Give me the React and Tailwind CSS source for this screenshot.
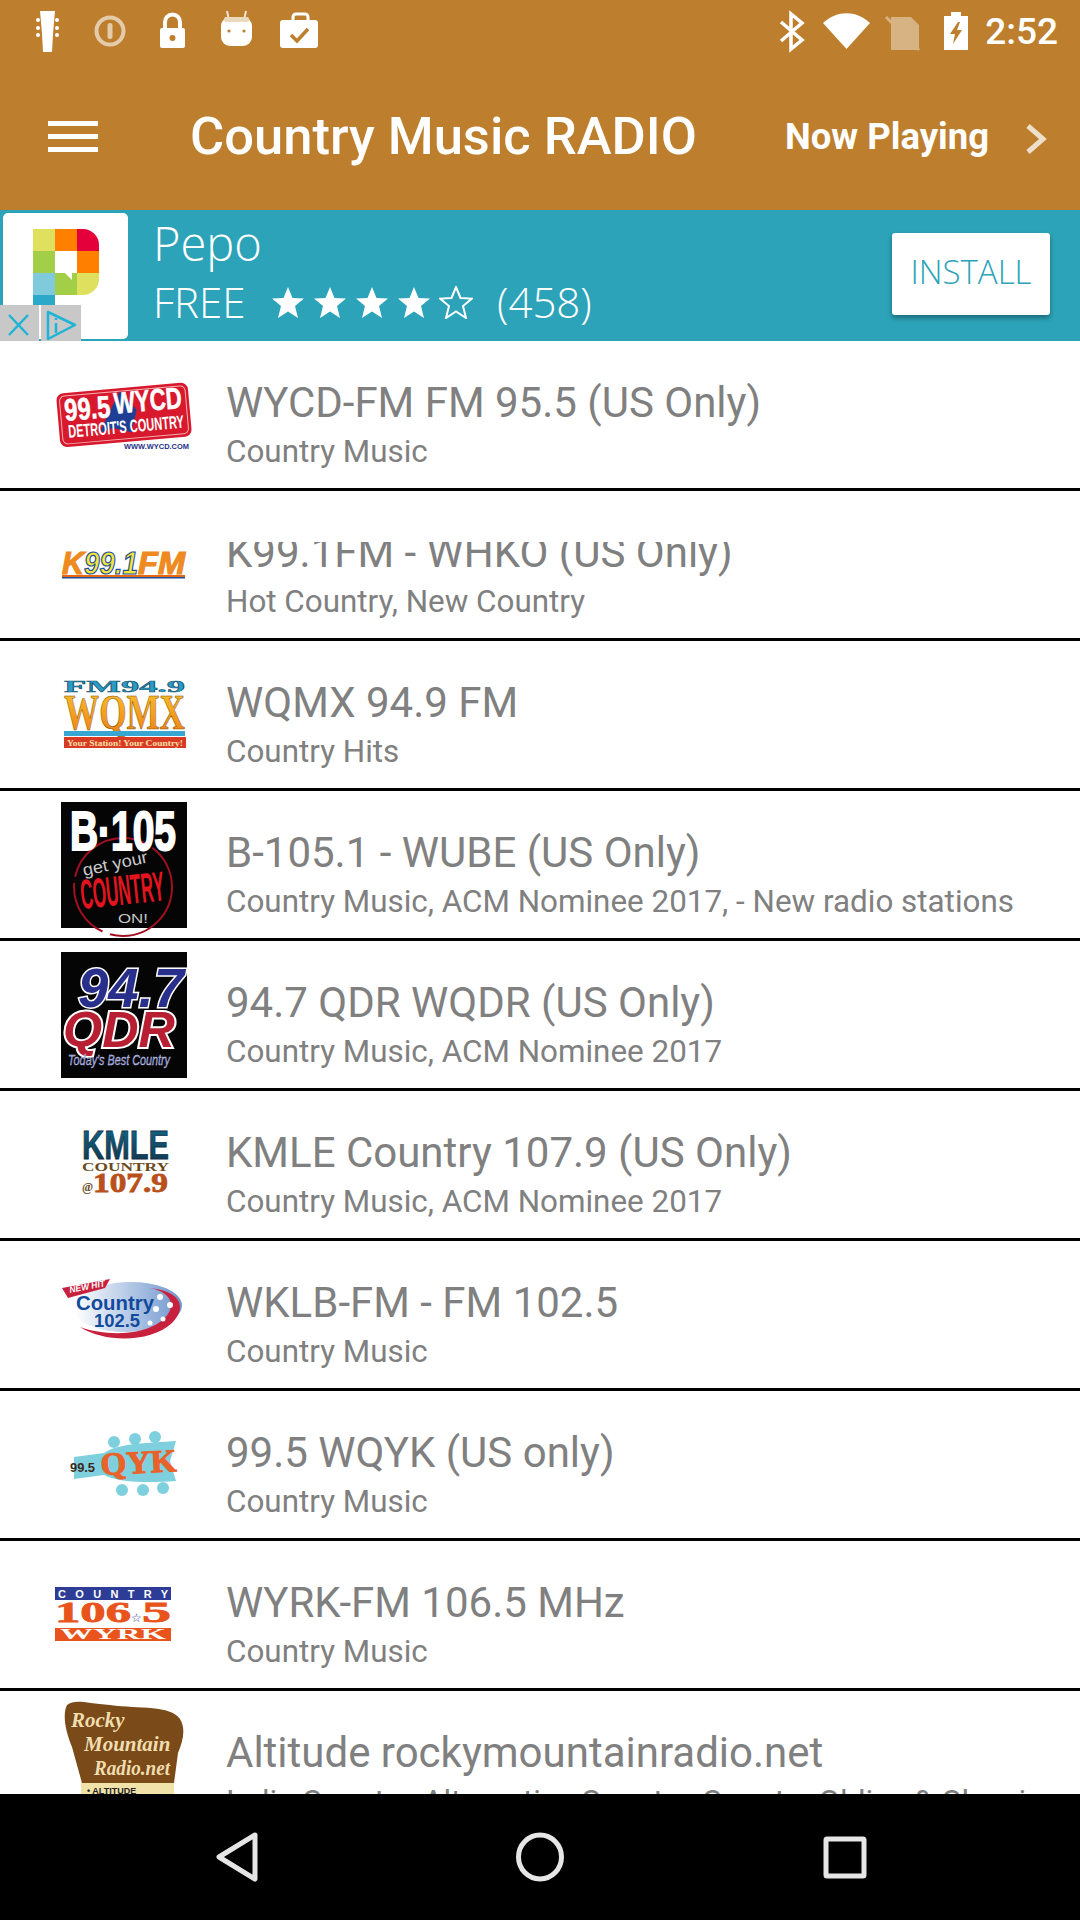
const roboto = '"Roboto", "Liberation Sans", sans-serif'

const sans = 'Liberation Sans, sans-serif'
const serif = 'Liberation Serif, serif'

function StatusLeft() {
  return (
    <svg width="330" height="62" viewBox="0 0 330 62" className="shrink-0" fill="#fff">
      {/* guitar head */}
      <path d="M40 11 L55 11 L54 22 L53 34 L52 52 L43 52 L42 34 L41 22 Z" />
      <circle cx="38" cy="20" r="2" /><circle cx="38" cy="28" r="2" /><circle cx="38" cy="35" r="2" />
      <circle cx="57" cy="20" r="2" /><circle cx="57" cy="28" r="2" /><circle cx="57" cy="35" r="2" />
      {/* priority */}
      <g opacity="0.6">
        <circle cx="110" cy="31" r="13.5" fill="none" stroke="#fff" strokeWidth="4" />
        <rect x="107.5" y="23" width="5" height="16" rx="2.5" />
      </g>
      {/* lock */}
      <path d="M165 29 V22 a7.5 7.5 0 0 1 15 0 V29" fill="none" stroke="#fff" strokeWidth="4" />
      <rect x="160" y="28" width="25" height="20" rx="2" />
      <circle cx="172.5" cy="38" r="3" fill="#BD7F2E" />
      {/* marshmallow android */}
      <path d="M229 20 L227 11 M244 20 L246 11" stroke="#fff" strokeWidth="2" opacity="0.8" />
      <rect x="221" y="17" width="31" height="29" rx="9" />
      <rect x="224" y="17" width="25" height="5" rx="2" fill="#EBD9BD" />
      <circle cx="229" cy="31" r="1.6" fill="#BD7F2E" /><circle cx="244" cy="31" r="1.6" fill="#BD7F2E" />
      {/* briefcase */}
      <path d="M293 21 V17 a3 3 0 0 1 3 -3 H305 a3 3 0 0 1 3 3 V21" fill="none" stroke="#fff" strokeWidth="3" />
      <rect x="280" y="20" width="38" height="28" rx="3" />
      <path d="M291 35 L297 41 L308 29" fill="none" stroke="#BD7F2E" strokeWidth="3.5" />
    </svg>
  )
}

function StatusRight() {
  return (
    <svg width="210" height="62" viewBox="760 0 210 62" className="shrink-0" fill="#fff">
      {/* bluetooth */}
      <path d="M780 22 L801 40 L790 49 V14 L801 23 L780 41" fill="none" stroke="#fff" strokeWidth="3.5" />
      {/* wifi */}
      <path d="M822 23 C836 10 855 10 869 23 L845.5 49 Z" />
      {/* no sim */}
      <g opacity="0.4">
        <path d="M890 17 H910 L918 25 V50 H890 Z" />
        <path d="M885 17 L918 50" stroke="#fff" strokeWidth="3" />
      </g>
      {/* battery */}
      <path d="M950 12 H960 V16 H967 V50 H943 V16 H950 Z" />
      <path d="M957 22 L949 34 H954 L952 44 L961 30 H956 L959 22 Z" fill="#BD7F2E" />
    </svg>
  )
}

function Star({ filled }) {
  return (
    <svg width="34" height="33" viewBox="0 0 34 33" className="shrink-0">
      <polygon
        points="17,1 21.5,12 33,12.6 24,20 27,32 17,25.5 7,32 10,20 1,12.6 12.5,12"
        fill={filled ? '#fff' : 'none'}
        stroke="#fff"
        strokeWidth={filled ? 0 : 2}
      />
    </svg>
  )
}

function PepoIcon() {
  return (
    <svg width="125" height="126" viewBox="0 0 125 126" className="shrink-0">
      <rect width="125" height="126" rx="5" fill="#fff" />
      <rect x="30" y="16" width="22" height="22" fill="#DFE05E" />
      <rect x="52" y="16" width="22" height="22" fill="#FF7F00" />
      <path d="M74 16 H80 a16 16 0 0 1 16 16 V38 H74 Z" fill="#E4003A" />
      <rect x="30" y="38" width="22" height="22" fill="#A3CE47" />
      <rect x="74" y="38" width="22" height="22" fill="#FF7F00" />
      <rect x="30" y="60" width="22" height="22" fill="#7FCBDC" />
      <path d="M52 60 L62 60 L69 67 L69 60 H74 V82 H52 Z" fill="#A3CE47" />
      <path d="M74 60 H96 V66 a16 16 0 0 1 -16 16 H74 Z" fill="#DFE05E" />
      <rect x="30" y="82" width="22" height="10" fill="#2CA9C9" />
    </svg>
  )
}

function AdBadge() {
  return (
    <svg width="81" height="36" viewBox="0 0 81 36" className="absolute left-0 bottom-0">
      <rect width="39" height="36" fill="#C8C8C8" />
      <rect x="41" width="40" height="36" fill="#C8C8C8" />
      <path d="M9 10 L28 30 M28 10 L9 30" stroke="#1FB4D6" strokeWidth="2.5" />
      <path d="M48 7 L75 20 L48 34 Z" fill="none" stroke="#1FB4D6" strokeWidth="2.5" strokeLinejoin="round" />
      <path d="M56 18 V28 M56 13 V15" stroke="#1FB4D6" strokeWidth="2.5" />
    </svg>
  )
}

function LogoWycd() {
  return (
    <g>
      <g transform="rotate(-5 123 74)">
        <rect x="58" y="47" width="132" height="54" rx="7" fill="#D8182C" />
        <rect x="61" y="50" width="126" height="48" rx="5" fill="none" stroke="#F3B3B3" strokeWidth="1" />
        <path d="M122 50 L137 70 L130 92 L112 86 L98 90 L112 66 Z" fill="#1F3F95" />
        <text x="65" y="75" fontFamily={sans} fontWeight="700" fontSize="31" fill="#fff" stroke="#fff" strokeWidth="0.6" textLength="46" lengthAdjust="spacingAndGlyphs">99.5</text>
        <text x="115" y="72" fontFamily={sans} fontWeight="700" fontSize="30" fill="#fff" stroke="#fff" strokeWidth="0.6" textLength="68" lengthAdjust="spacingAndGlyphs">WYCD</text>
        <text x="67" y="92" fontFamily={sans} fontWeight="700" fontSize="18" fill="#fff" textLength="116" lengthAdjust="spacingAndGlyphs">DETROIT'S COUNTRY</text>
      </g>
      <text x="124" y="108" fontFamily={sans} fontWeight="700" fontSize="7" fill="#25308A" textLength="65" lengthAdjust="spacingAndGlyphs">WWW.WYCD.COM</text>
    </g>
  )
}

function LogoK99() {
  return (
    <g>
      <text x="62" y="83" fontFamily={sans} fontWeight="700" fontStyle="italic" fontSize="31" fill="#EE8A22" stroke="#EE8A22" strokeWidth="1.2" textLength="22" lengthAdjust="spacingAndGlyphs">K</text>
      <text x="84" y="83" fontFamily={sans} fontWeight="700" fontStyle="italic" fontSize="31" fill="#F4E53A" stroke="#1D4F9C" strokeWidth="1.2" textLength="54" lengthAdjust="spacingAndGlyphs">99.1</text>
      <text x="138" y="83" fontFamily={sans} fontWeight="700" fontStyle="italic" fontSize="31" fill="#EE8A22" stroke="#EE8A22" strokeWidth="1.2" textLength="47" lengthAdjust="spacingAndGlyphs">FM</text>
      <rect x="62" y="84" width="123" height="2" fill="#E8680F" />
      <rect x="62" y="86" width="123" height="1.5" fill="#1D4F9C" />
    </g>
  )
}

function LogoWqmx() {
  return (
    <g>
      <defs>
        <linearGradient id="wq" x1="0" y1="0" x2="0" y2="1">
          <stop offset="0" stopColor="#F9C62E" />
          <stop offset="1" stopColor="#EE7C12" />
        </linearGradient>
      </defs>
      <text x="64" y="51" fontFamily={serif} fontWeight="700" fontSize="17" fill="#2A9CC6" stroke="#14506E" strokeWidth="0.5" textLength="121" lengthAdjust="spacingAndGlyphs">FM94.9</text>
      <text x="64" y="88" fontFamily={serif} fontWeight="700" fontSize="51" fill="url(#wq)" stroke="#7B4A0C" strokeWidth="0.6" textLength="121" lengthAdjust="spacingAndGlyphs">WQMX</text>
      <rect x="64" y="90" width="121" height="5" fill="#37A6D2" />
      <rect x="64" y="96" width="122" height="11" fill="#D83A24" />
      <text x="67" y="105" fontFamily={serif} fontWeight="700" fontSize="9" fill="#F6E0A8" textLength="116" lengthAdjust="spacingAndGlyphs">Your Station! Your Country!</text>
    </g>
  )
}

function LogoB105() {
  return (
    <g>
      <rect x="61" y="11" width="126" height="126" fill="#050505" />
      <circle cx="123" cy="96" r="49" fill="none" stroke="#A01020" strokeWidth="2" strokeDasharray="90 8 60 6" />
      <text x="70" y="59" fontFamily={sans} fontWeight="700" fontSize="55" fill="#fff" stroke="#fff" strokeWidth="2" textLength="106" lengthAdjust="spacingAndGlyphs">B·105</text>
      <text x="84" y="85" fontFamily={sans} fontSize="17" fill="#C9C9C9" transform="rotate(-12 84 85)" textLength="66" lengthAdjust="spacingAndGlyphs">get your</text>
      <text x="82" y="118" fontFamily={sans} fontWeight="700" fontSize="42" fill="#E4141F" transform="rotate(-6 82 118)" textLength="84" lengthAdjust="spacingAndGlyphs">COUNTRY</text>
      <text x="118" y="132" fontFamily={sans} fontSize="13" fill="#C9C9C9" textLength="30" lengthAdjust="spacingAndGlyphs">ON!</text>
    </g>
  )
}

function LogoQdr() {
  return (
    <g>
      <rect x="61" y="11" width="126" height="126" fill="#050505" />
      <text x="78" y="66" fontFamily={sans} fontWeight="700" fontStyle="italic" fontSize="55" fill="#28308C" stroke="#fff" strokeWidth="3" paintOrder="stroke" textLength="106" lengthAdjust="spacingAndGlyphs">94.7</text>
      <text x="63" y="106" fontFamily={sans} fontWeight="700" fontStyle="italic" fontSize="50" fill="#B81F32" stroke="#fff" strokeWidth="4" paintOrder="stroke" textLength="112" lengthAdjust="spacingAndGlyphs">QDR</text>
      <text x="68" y="124" fontFamily={sans} fontStyle="italic" fontSize="14" fill="#7E88CE" stroke="#DDE" strokeWidth="0.3" textLength="102" lengthAdjust="spacingAndGlyphs">Today's Best Country</text>
    </g>
  )
}

function LogoKmle() {
  return (
    <g>
      <defs>
        <linearGradient id="km" x1="0" y1="0" x2="0" y2="1">
          <stop offset="0" stopColor="#0F6B8C" />
          <stop offset="1" stopColor="#123248" />
        </linearGradient>
      </defs>
      <text x="82" y="68" fontFamily={sans} fontWeight="700" fontSize="40" fill="url(#km)" stroke="#123248" strokeWidth="0.8" textLength="87" lengthAdjust="spacingAndGlyphs">KMLE</text>
      <text x="82" y="80" fontFamily={serif} fontWeight="700" fontSize="12" fill="#6A4A20" textLength="87" lengthAdjust="spacingAndGlyphs">COUNTRY</text>
      <text x="82" y="100" fontFamily={serif} fontWeight="700" fontSize="12" fill="#6A4A20">@</text>
      <text x="93" y="101" fontFamily={serif} fontWeight="700" fontSize="27" fill="#B9501C" stroke="#B9501C" strokeWidth="0.8" textLength="75" lengthAdjust="spacingAndGlyphs">107.9</text>
    </g>
  )
}

function LogoCountry() {
  return (
    <g>
      <defs>
        <linearGradient id="cn" x1="0" y1="0" x2="1" y2="0">
          <stop offset="0" stopColor="#FFFFFF" />
          <stop offset="1" stopColor="#6E95CE" />
        </linearGradient>
      </defs>
      <ellipse cx="128" cy="66" rx="54" ry="25" fill="url(#cn)" transform="rotate(-2 128 66)" />
      <path d="M80 86 C105 102 150 102 172 82 C188 66 180 50 150 47 C176 52 176 70 160 81 C140 95 105 95 80 86 Z" fill="#C8213E" />
      <path d="M62 47 L110 38 L105 47 L68 57 Z" fill="#C8213E" />
      <text x="70" y="52" fontFamily={sans} fontStyle="italic" fontWeight="700" fontSize="9" fill="#fff" transform="rotate(-11 70 52)" textLength="36" lengthAdjust="spacingAndGlyphs">NEW HIT</text>
      <text x="76" y="69" fontFamily={sans} fontWeight="700" fontSize="21" fill="#124A9C" textLength="78" lengthAdjust="spacingAndGlyphs">Country</text>
      <text x="94" y="86" fontFamily={sans} fontWeight="700" fontSize="18" fill="#124A9C" textLength="46" lengthAdjust="spacingAndGlyphs">102.5</text>
      <g fill="#fff">
        <circle cx="160" cy="56" r="3" /><circle cx="170" cy="64" r="3" /><circle cx="156" cy="68" r="3" />
        <circle cx="163" cy="78" r="2.5" /><circle cx="150" cy="82" r="2.5" />
      </g>
    </g>
  )
}

function LogoQyk() {
  return (
    <g>
      <path d="M74 66 L104 62 C118 52 150 52 176 50 L170 70 L176 90 C150 92 118 92 104 84 L74 88 Z" fill="#7FD0DE" />
      <g fill="#7FD0DE">
        <circle cx="114" cy="51" r="6" /><circle cx="135" cy="48" r="6" /><circle cx="155" cy="46" r="6" />
        <circle cx="122" cy="99" r="6" /><circle cx="143" cy="99" r="6" /><circle cx="163" cy="97" r="6" />
      </g>
      <text x="70" y="81" fontFamily={sans} fontWeight="700" fontSize="13" fill="#3A2A1C" textLength="25" lengthAdjust="spacingAndGlyphs">99.5</text>
      <text x="101" y="84" fontFamily={serif} fontWeight="700" fontSize="32" fill="#E8622A" stroke="#E8622A" strokeWidth="1" textLength="76" lengthAdjust="spacingAndGlyphs" transform="rotate(-3 101 84)">QYK</text>
    </g>
  )
}

function LogoWyrk() {
  return (
    <g>
      <rect x="55" y="46" width="116" height="13" fill="#2D3C96" />
      <text x="58" y="57" fontFamily={sans} fontWeight="700" fontSize="11" fill="#fff" textLength="110" lengthAdjust="spacing">COUNTRY</text>
      <text x="55" y="81" fontFamily={serif} fontWeight="700" fontSize="29" fill="#E8541C" stroke="#E8541C" strokeWidth="0.8" textLength="76" lengthAdjust="spacingAndGlyphs">106</text>
      <text x="142" y="81" fontFamily={serif} fontWeight="700" fontSize="29" fill="#E8541C" stroke="#E8541C" strokeWidth="0.8" textLength="29" lengthAdjust="spacingAndGlyphs">5</text>
      <text x="131" y="81" fontFamily={sans} fontSize="12" fill="#2D3C96">☆</text>
      <rect x="55" y="87" width="116" height="13" fill="#E8541C" />
      <text x="60" y="98" fontFamily={serif} fontWeight="700" fontSize="14" fill="#fff" textLength="106" lengthAdjust="spacingAndGlyphs">WYRK</text>
    </g>
  )
}

function LogoRocky() {
  return (
    <g>
      <rect x="81" y="90" width="93" height="30" fill="#F0E2A8" />
      <path d="M67 14 C75 8 85 12 110 14 C140 18 170 14 180 28 C186 38 183 50 178 62 L174 92 L82 92 L72 56 C66 42 62 24 67 14 Z" fill="#7A4A18" />
      <text x="71" y="36" fontFamily={serif} fontStyle="italic" fontWeight="700" fontSize="21" fill="#F0DDB0">Rocky</text>
      <text x="84" y="60" fontFamily={serif} fontStyle="italic" fontWeight="700" fontSize="21" fill="#F0DDB0">Mountain</text>
      <text x="94" y="84" fontFamily={serif} fontStyle="italic" fontWeight="700" fontSize="21" fill="#F0DDB0" textLength="76" lengthAdjust="spacingAndGlyphs">Radio.net</text>
      <text x="87" y="103" fontFamily={sans} fontWeight="700" fontSize="9" fill="#222">• ALTITUDE</text>
    </g>
  )
}

const stations = [
  { title: 'WYCD-FM FM 95.5 (US Only)', sub: 'Country Music', logo: <LogoWycd /> },
  { title: 'K99.1FM - WHKO (US Only)', sub: 'Hot Country, New Country', logo: <LogoK99 />, clip: true },
  { title: 'WQMX 94.9 FM', sub: 'Country Hits', logo: <LogoWqmx /> },
  { title: 'B-105.1 - WUBE (US Only)', sub: 'Country Music, ACM Nominee 2017, - New radio stations', logo: <LogoB105 /> },
  { title: '94.7 QDR WQDR (US Only)', sub: 'Country Music, ACM Nominee 2017', logo: <LogoQdr /> },
  { title: 'KMLE Country 107.9 (US Only)', sub: 'Country Music, ACM Nominee 2017', logo: <LogoKmle /> },
  { title: 'WKLB-FM - FM 102.5', sub: 'Country Music', logo: <LogoCountry /> },
  { title: '99.5 WQYK (US only)', sub: 'Country Music', logo: <LogoQyk /> },
  { title: 'WYRK-FM 106.5 MHz', sub: 'Country Music', logo: <LogoWyrk /> },
  { title: 'Altitude rockymountainradio.net', sub: 'Indie Country, Alternative Country, Country Oldies & Classic', logo: <LogoRocky /> },
]

function Row({ station }) {
  return (
    <div className="flex h-[150px] shrink-0 border-b-[3px] border-black bg-white">
      <svg width="226" height="147" viewBox="0 0 226 147" className="shrink-0">
        {station.logo}
      </svg>
      <div className="min-w-0 flex-1 pt-[38px] text-[#808080]">
        <div className={`whitespace-nowrap text-[42px] leading-[48px] ${station.clip ? '[clip-path:inset(13px_-20px_-20px_-20px)]' : ''}`}>
          {station.title}
        </div>
        <div className="mt-[5px] whitespace-nowrap text-[31.4px] leading-[40px]">{station.sub}</div>
      </div>
    </div>
  )
}

export default function App() {
  return (
    <div className="flex h-[1920px] w-[1080px] flex-col overflow-hidden bg-white" style={{ fontFamily: roboto }}>
      <header className="h-[210px] shrink-0 bg-[#BD7F2E] text-white">
        <div className="flex h-[62px] items-center justify-between pr-[22px]">
          <StatusLeft />
          <div className="flex items-center gap-[14px]">
            <StatusRight />
            <span className="text-[37px] font-medium leading-none">2:52</span>
          </div>
        </div>
        <div className="flex h-[148px] items-center">
          <div className="ml-[48px] flex w-[50px] shrink-0 flex-col gap-[8px]">
            <span className="h-[5px] bg-white" />
            <span className="h-[5px] bg-white" />
            <span className="h-[5px] bg-white" />
          </div>
          <h1 className="ml-[92px] w-[595px] shrink-0 whitespace-nowrap text-[52.5px] font-medium leading-none">Country Music RADIO</h1>
          <span className="mt-[3px] whitespace-nowrap text-[36.5px] font-bold leading-none">Now Playing</span>
          <svg width="24" height="32" viewBox="0 0 24 32" className="ml-[35px] mt-[6px] shrink-0">
            <path d="M4 3 L19 16 L4 29" fill="none" stroke="#fff" strokeOpacity="0.75" strokeWidth="5" />
          </svg>
        </div>
      </header>

      <div className="relative flex h-[131px] shrink-0 items-start bg-[#2CA3B8] pl-[3px] pt-[3px] text-white">
        <PepoIcon />
        <div className="ml-[25px] w-[739px] shrink-0 font-['Open_Sans'] font-light">
          <div className="text-[47px] leading-[60px]">Pepo</div>
          <div className="flex items-center">
            <span className="w-[118px] shrink-0 text-[42px] leading-[58px]">FREE</span>
            <div className="flex w-[226px] shrink-0 gap-[8px]">
              <Star filled /><Star filled /><Star filled /><Star filled /><Star />
            </div>
            <span className="text-[42px] leading-[58px]">(458)</span>
          </div>
        </div>
        <div className="mt-[20px] flex h-[82px] w-[158px] shrink-0 items-center justify-center rounded-[3px] bg-white pb-[4px] font-['Open_Sans'] text-[33px] font-light text-[#2CA3B8] shadow-[0_3px_5px_rgba(0,0,0,0.35)]">
          INSTALL
        </div>
        <AdBadge />
      </div>

      <div className="min-h-0 flex-1 overflow-hidden">
        {stations.map((s) => (
          <Row key={s.title} station={s} />
        ))}
      </div>

      <nav className="h-[126px] shrink-0 bg-black">
        <svg width="1080" height="126" viewBox="0 0 1080 126" fill="none" stroke="#E6E6E6" strokeWidth="5" strokeLinejoin="round">
          <path d="M255 41 L219 63 L255 85 Z" />
          <ellipse cx="540" cy="63" rx="21.5" ry="22" />
          <rect x="826" y="45" width="38" height="37" rx="1" />
        </svg>
      </nav>
    </div>
  )
}
